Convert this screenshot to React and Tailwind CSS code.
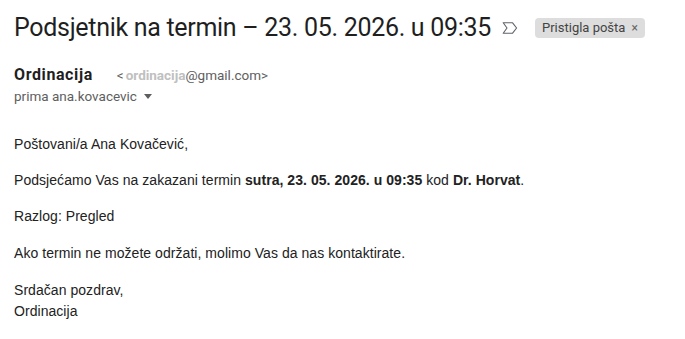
import React from "react";

const ImportantIcon = () => (
  <svg width="16" height="12" viewBox="0 0 16 12" className="text-[#5f6368]">
    <path
      d="M1.2 0.8 H10.6 L14.6 6 L10.6 11.2 H1.2 L5 6 Z"
      fill="none"
      stroke="currentColor"
      strokeWidth="1.1"
      strokeLinejoin="round"
    />
  </svg>
);

const App = () => {
  return (
    <div className="w-[685px] h-[339px] bg-white overflow-hidden text-[#222]">
      <div className="flex items-center pl-[14px] pt-[11px] h-[34px] box-content">
        <h1 className="text-[25px] leading-[34px] font-['Roboto',sans-serif] text-[#1f1f1f] tracking-[-0.3px]">
          Podsjetnik na termin – 23. 05. 2026. u 09:35
        </h1>
        <span className="ml-[11px] flex items-center">
          <ImportantIcon />
        </span>
        <span className="ml-[17px] flex items-center h-[20px] px-[7px] rounded-[4px] bg-[#dddddd] text-[13px] text-[#444] font-['Roboto',sans-serif]">
          Pristigla pošta
          <span className="ml-[6px] text-[12px] text-[#666]">×</span>
        </span>
      </div>

      <div className="pl-[14px] pt-[19px] font-['Roboto',sans-serif]">
        <div className="flex items-baseline">
          <span className="text-[16px] leading-[22px] font-bold tracking-[0.6px] text-[#1f1f1f]">
            Ordinacija
          </span>
          <span className="ml-[24px] text-[13.5px] text-[#5e5e5e]">
            &lt;<span className="ml-[2px] font-bold text-[#c0c0c0]">ordinacija</span>@gmail.com&gt;
          </span>
        </div>
        <div className="flex items-center text-[13.5px] leading-[20px] text-[#5e5e5e]">
          prima ana.kovacevic
          <svg width="8" height="5" viewBox="0 0 8 5" className="ml-[7px]">
            <path d="M0 0 H8 L4 5 Z" fill="#5e5e5e" />
          </svg>
        </div>
      </div>

      <div className="pl-[14px] pt-[28px] text-[14px] leading-[21px] tracking-[0.05px] text-[#222] font-['Liberation_Sans',Arial,sans-serif]">
        <p>Poštovani/a Ana Kovačević,</p>
        <p className="mt-[15px]">
          Podsjećamo Vas na zakazani termin <b>sutra, 23. 05. 2026. u 09:35</b> kod{" "}
          <b>Dr. Horvat</b>.
        </p>
        <p className="mt-[15px]">Razlog: Pregled</p>
        <p className="mt-[16px]">
          Ako termin ne možete održati, molimo Vas da nas kontaktirate.
        </p>
        <p className="mt-[16px]">
          Srdačan pozdrav,
          <br />
          Ordinacija
        </p>
      </div>
    </div>
  );
};

export default App;
